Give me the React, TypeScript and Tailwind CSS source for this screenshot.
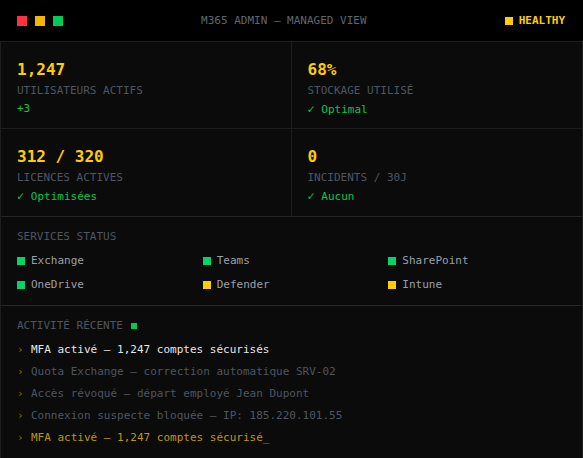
import React from 'react'

const stats = [
  { value: '1,247', label: 'UTILISATEURS ACTIFS', sub: '+3' },
  { value: '68%', label: 'STOCKAGE UTILISÉ', sub: '✓ Optimal' },
  { value: '312 / 320', label: 'LICENCES ACTIVES', sub: '✓ Optimisées' },
  { value: '0', label: 'INCIDENTS / 30J', sub: '✓ Aucun' },
]

const services = [
  { name: 'Exchange', ok: true },
  { name: 'Teams', ok: true },
  { name: 'SharePoint', ok: true },
  { name: 'OneDrive', ok: true },
  { name: 'Defender', ok: false },
  { name: 'Intune', ok: false },
]

const activity = [
  { text: 'MFA activé — 1,247 comptes sécurisés', tone: 'text-[#e6e6e6]' },
  { text: 'Quota Exchange — correction automatique SRV-02', tone: 'text-[#4f5561]' },
  { text: 'Accès révoqué — départ employé Jean Dupont', tone: 'text-[#4f5561]' },
  { text: 'Connexion suspecte bloquée — IP: 185.220.101.55', tone: 'text-[#4f5561]' },
]

export default function App() {
  return (
    <div
      className="w-full min-h-[458px] bg-black text-[11px] leading-4"
      style={{ fontFamily: '"DejaVu Sans Mono", "Liberation Mono", monospace' }}
    >
      {/* Header */}
      <header className="h-[41px] pl-[17px] pr-[18px] flex items-center justify-between">
        <div className="flex items-center gap-2">
          <span className="w-2.5 h-2.5 bg-[#ff3340]" />
          <span className="w-2.5 h-2.5 bg-[#f5b400]" />
          <span className="w-2.5 h-2.5 bg-[#00cc55]" />
        </div>
        <div className="text-[#5f6672]">M365 ADMIN — MANAGED VIEW</div>
        <div className="flex items-center gap-1.5">
          <span className="w-2 h-2 bg-[#ffcc00]" />
          <span className="font-bold text-[#ffcc00]">HEALTHY</span>
        </div>
      </header>

      {/* Panel */}
      <div className="border border-[#1e1e1e] bg-[#0b0b0b]">
        {/* Stats */}
        <div className="grid grid-cols-2 border-b border-[#262626]">
          {stats.map((s, i) => (
            <div
              key={s.label}
              className={`pl-4 pt-[18px] h-[87px] ${i % 2 === 0 ? 'border-r border-[#1e1e1e]' : ''} ${i < 2 ? 'border-b border-[#1e1e1e]' : ''}`}
            >
              <div className="text-base leading-5 font-bold text-[#ffcc00]">{s.value}</div>
              <div className="mt-[3px] text-[#4f5561]">{s.label}</div>
              <div className="mt-0.5 text-[#00c853]">
                {s.sub.startsWith('✓') ? (
                  <>
                    <span className="text-[12px]">✓</span>
                    {s.sub.slice(1)}
                  </>
                ) : (
                  s.sub
                )}
              </div>
            </div>
          ))}
        </div>

        {/* Services */}
        <div className="px-4 pt-3 pb-3 border-b border-[#262626]">
          <div className="mb-2 text-[#4f5561]">SERVICES STATUS</div>
          <div className="grid grid-cols-3 gap-2">
            {services.map((s) => (
              <div key={s.name} className="flex items-center gap-1.5 text-[#9aa0a8]">
                <span className={`w-2 h-2 ${s.ok ? 'bg-[#00d46a]' : 'bg-[#ffcc00]'}`} />
                <span>{s.name}</span>
              </div>
            ))}
          </div>
        </div>

        {/* Activity */}
        <div className="px-4 pt-3 pb-3">
          <div className="mb-2 flex items-center gap-2 text-[#4f5561]">
            <span>ACTIVITÉ RÉCENTE</span>
            <span className="w-1.5 h-1.5 bg-[#00cc55]" />
          </div>
          <div className="flex flex-col gap-1.5">
            {activity.map((a) => (
              <div key={a.text} className="flex">
                <span className="w-[14px] text-[#8a6e00]">›</span>
                <span className={a.tone}>{a.text}</span>
              </div>
            ))}
            <div className="flex">
              <span className="w-[14px] text-[#8a6e00]">›</span>
              <span className="text-[#bf9800]">MFA activé — 1,247 comptes sécurisé_</span>
            </div>
          </div>
        </div>
      </div>
    </div>
  )
}
